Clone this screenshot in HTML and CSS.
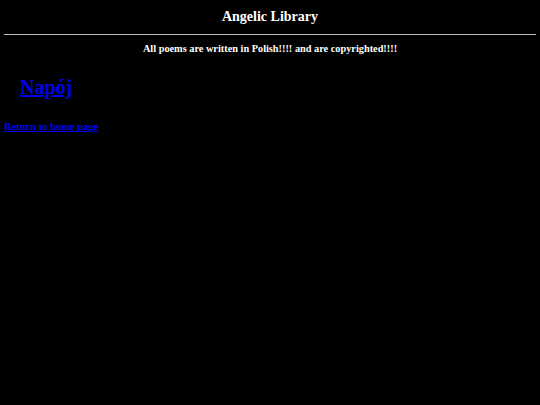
FILE: index.html
```html
<!DOCTYPE html>
<html>
<head>
<meta charset="utf-8">
<title>Angelic Library</title>
<link rel="stylesheet" href="styles.css">
</head>
<body>
<h1 class="title">Angelic Library</h1>
<hr class="rule">
<p class="note">All poems are written in Polish!!!! and are copyrighted!!!!</p>
<ul class="poems">
<li><a class="poem" href="#">Napój</a></li>
</ul>
<a class="home" href="#">Return to home page</a>
</body>
</html>
```
FILE: styles.css
```css
html, body {
  background: #000;
}
body {
  margin: 4px;
  color: #fff;
  font-family: "Liberation Serif", serif;
  font-weight: bold;
}
.title {
  margin: 0;
  padding-top: 4px;
  font-size: 14px;
  line-height: 18px;
  text-align: center;
}
.rule {
  margin: 8px 0 0;
  border: 0;
  border-top: 1px solid #bbb;
  height: 0;
}
.note {
  margin: 7px 0 0;
  font-size: 10.3px;
  line-height: 14px;
  text-align: center;
}
.poems {
  list-style: none;
  margin: 18px 0 0;
  padding: 0 0 0 16px;
}
.poem {
  font-size: 20px;
  line-height: 26px;
  color: #0000ee;
}
.home {
  display: block;
  margin-top: 20px;
  font-size: 10.5px;
  line-height: 14px;
  color: #0000ee;
}
```
